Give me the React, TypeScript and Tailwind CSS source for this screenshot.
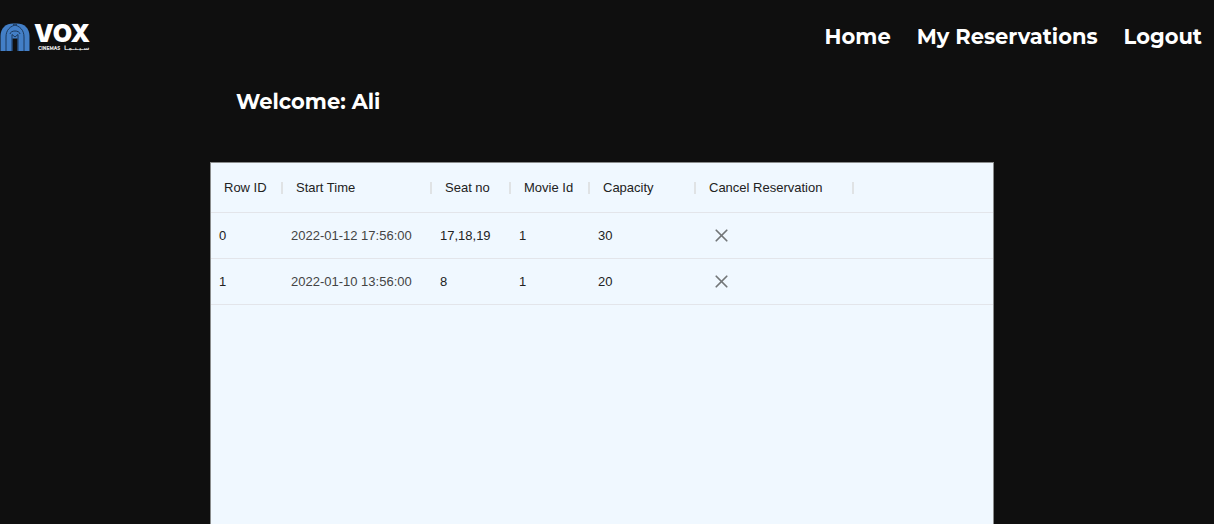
import { X } from "lucide-react";

type Reservation = {
  id: number;
  startTime: string;
  seats: string;
  movieId: number;
  capacity: number;
};

const reservations: Reservation[] = [
  { id: 0, startTime: "2022-01-12 17:56:00", seats: "17,18,19", movieId: 1, capacity: 30 },
  { id: 1, startTime: "2022-01-10 13:56:00", seats: "8", movieId: 1, capacity: 20 },
];

const columns = ["Row ID", "Start Time", "Seat no", "Movie Id", "Capacity", "Cancel Reservation"];

function Logo() {
  return (
    <svg className="overflow-visible" width="92" height="32" viewBox="0 0 92 32" role="img" aria-label="VOX Cinemas">
      <path d="M0.500 30V15C0.500 7 6 2.500 13 2.500h4C24 2.500 29.500 7 29.500 15v15z" fill="#437fc7" />
      <path d="M12.500 30V17.500h5V30z" fill="#101010" />
      <g fill="none" stroke="#173252" strokeWidth="0.900">
        <path d="M6 30V16C6 9 10 5 17 3.500" />
        <path d="M24 30V16C24 9 20 5 13 3.500" />
        <path d="M12 30V13.500L15 16L18 13.500V30" />
        <path d="M10 13C10.500 9 19.500 9 20 13" />
      </g>
      <text x="34" y="21" fill="#fff" fontFamily="Inter, 'Liberation Sans', sans-serif" fontSize="25" fontWeight="900">VOX</text>
      <text x="38" y="29" fill="#ddd" fontFamily="Montserrat, Inter, sans-serif" fontSize="4.500" fontWeight="800">CINEMAS</text>
      <text x="64" y="29" fill="#ddd" fontFamily="'DejaVu Sans', sans-serif" fontSize="6" fontWeight="700">سـيـنـمـا</text>
    </svg>
  );
}

export default function App() {
  return (
    <div className="flex min-h-screen flex-col bg-[#0f0f0f] font-['Montserrat','Inter',sans-serif] text-white">
      <header className="flex h-[74px] items-center justify-between pr-3">
        <a href="#home" aria-label="VOX Cinemas">
          <Logo />
        </a>
        <nav className="flex gap-[26px] text-[21px] leading-7 font-bold">
          <a href="#home">Home</a>
          <a href="#reservations">My Reservations</a>
          <a href="#logout">Logout</a>
        </nav>
      </header>
      <main className="flex flex-1 flex-col pr-2.5">
        <div className="mx-auto flex w-full max-w-[784px] flex-1 flex-col">
          <h1 className="px-[26px] pt-[14px] pb-[46px] text-[21px] leading-7 font-bold">Welcome: Ali</h1>
          <section className="flex-1 overflow-x-auto border border-b-0 border-[#8a8c8c] bg-[#f0f8ff] font-['Liberation_Sans',Arial,sans-serif]">
            <table className="w-full table-fixed border-collapse text-left text-[13px] leading-4 text-[#222]">
              <colgroup>
                <col className="w-[72px]" />
                <col className="w-[149px]" />
                <col className="w-[79px]" />
                <col className="w-[79px]" />
                <col className="w-[106px]" />
                <col className="w-[158px]" />
                <col />
              </colgroup>
              <thead>
                <tr className="h-[49px] border-b border-[#e3e5ea]">
                  {columns.map((name) => (
                    <th key={name} scope="col" className="px-0 pt-0.5 pb-0 font-normal">
                      <span className="flex h-3 items-center border-r-2 border-[#e0e3e5] pl-[13px] whitespace-nowrap">{name}</span>
                    </th>
                  ))}
                  <td />
                </tr>
              </thead>
              <tbody>
                {reservations.map((r) => (
                  <tr key={r.id} className="h-[46px] border-b border-[#e3e5ea]">
                    <td className="pt-0.5 pl-2">{r.id}</td>
                    <td className="pt-0.5 pl-2 whitespace-nowrap text-[#444]">{r.startTime}</td>
                    <td className="pt-0.5 pl-2">{r.seats}</td>
                    <td className="pt-0.5 pl-2">{r.movieId}</td>
                    <td className="pt-0.5 pl-2">{r.capacity}</td>
                    <td className="pl-[15px]">
                      <button type="button" aria-label={`Cancel reservation ${r.id}`} className="flex text-[#727678]">
                        <X size={21} strokeWidth={2} />
                      </button>
                    </td>
                    <td />
                  </tr>
                ))}
              </tbody>
            </table>
          </section>
        </div>
      </main>
    </div>
  );
}
